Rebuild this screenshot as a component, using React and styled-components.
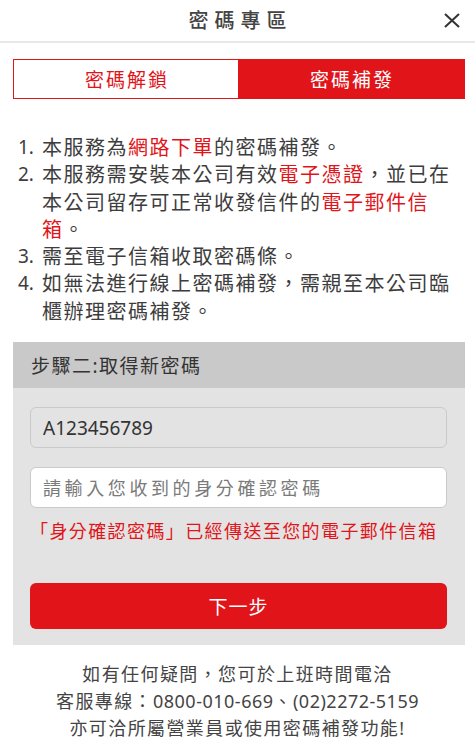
import React from "react";
import styled, { createGlobalStyle } from "styled-components";

const Global = createGlobalStyle`
  html, body {
    margin: 0;
    padding: 0;
    background: #fff;
  }
  body {
    font-family: "Noto Sans", "Noto Sans CJK TC", sans-serif;
    color: #333;
  }
`;

const RED = "#e11419";

const Page = styled.div`
  width: 475px;
  min-height: 746px;
  background: #fff;
`;

const Header = styled.header`
  height: 41px;
  border-bottom: 2px solid #e8e8e8;
  display: flex;
  align-items: center;
  justify-content: center;
  position: relative;
`;

const Title = styled.h1`
  margin: 0;
  font-size: 20px;
  font-weight: 500;
  letter-spacing: 6px;
  padding-left: 6px;
  color: #444;
  line-height: 1;
`;

const Close = styled.button`
  position: absolute;
  right: 14px;
  top: 11px;
  width: 18px;
  height: 18px;
  padding: 0;
  border: 0;
  background: none;
  display: flex;
  align-items: center;
  justify-content: center;
`;

const Content = styled.main`
  margin: 0 10px 0 13px;
`;

const Tabs = styled.div`
  margin-top: 16px;
  display: grid;
  grid-template-columns: 224px 1fr;
  height: 40px;
  border: 1.5px solid ${RED};
  box-sizing: border-box;
`;

const Tab = styled.div`
  display: flex;
  align-items: center;
  justify-content: center;
  font-size: 19px;
  letter-spacing: 2px;
  padding-left: 2px;
  background: ${(p) => (p.active ? RED : "#fff")};
  color: ${(p) => (p.active ? "#fff" : RED)};
`;

const List = styled.ol`
  list-style: none;
  margin: 35px 0 0;
  padding: 0 0 0 5px;
`;

const Item = styled.li`
  display: grid;
  grid-template-columns: 24px 1fr;
  font-size: 20px;
  line-height: 27.3px;
  color: #3d3d3d;
`;

const Num = styled.span`
  font-size: 19px;
`;

const Body = styled.span`
  letter-spacing: 1.5px;
`;

const Hl = styled.span`
  color: ${RED};
`;

const Panel = styled.section`
  margin-top: 17px;
  background: #e3e3e3;
`;

const PanelHead = styled.div`
  height: 46px;
  background: #c9c9c9;
  display: flex;
  align-items: center;
  padding-left: 18px;
  font-size: 19px;
  letter-spacing: 1.5px;
  color: #333;
`;

const PanelBody = styled.div`
  padding: 19px 18px 16px 17px;
  display: flex;
  flex-direction: column;
`;

const Field = styled.input`
  box-sizing: border-box;
  height: 41px;
  width: 100%;
  border: 1.5px solid #cacaca;
  border-radius: 6px;
  padding: 0 12px;
  font-family: "Noto Sans", "Noto Sans CJK TC", sans-serif;
  font-size: 19px;
  color: #333;
  background: ${(p) => (p.disabled ? "#e3e3e3" : "#fff")};
  margin-bottom: ${(p) => p.gap || 0}px;
  outline: none;
  &::placeholder {
    color: #7a7a7a;
    font-size: 18px;
    letter-spacing: 3.6px;
  }
  &:disabled {
    -webkit-text-fill-color: #333;
    opacity: 1;
  }
`;

const Notice = styled.p`
  margin: 10px 0 0 0;
  font-size: 18px;
  letter-spacing: 1.4px;
  line-height: 27px;
  color: ${RED};
  white-space: nowrap;
`;

const NextButton = styled.button`
  margin-top: 38px;
  height: 46px;
  border: 0;
  border-radius: 6px;
  background: ${RED};
  color: #fff;
  font-family: "Noto Sans", "Noto Sans CJK TC", sans-serif;
  font-size: 19px;
  letter-spacing: 1px;
`;

const Footer = styled.footer`
  padding: 16px 0 10px;
  text-align: center;
  font-size: 18px;
  letter-spacing: 1.4px;
  line-height: 27px;
  color: #444;
`;

const Digits = styled.span`
  letter-spacing: 0.5px;
`;

export default function App() {
  return (
    <Page>
      <Global />
      <Header>
        <Title>密碼專區</Title>
        <Close aria-label="close">
          <svg width="16" height="15" viewBox="0 0 16 15">
            <path d="M1 1L15 14M15 1L1 14" stroke="#333" strokeWidth="2" fill="none" />
          </svg>
        </Close>
      </Header>
      <Content>
        <Tabs>
          <Tab>密碼解鎖</Tab>
          <Tab active>密碼補發</Tab>
        </Tabs>
        <List>
          <Item>
            <Num>1.</Num>
            <Body>
              本服務為<Hl>網路下單</Hl>的密碼補發。
            </Body>
          </Item>
          <Item>
            <Num>2.</Num>
            <Body>
              本服務需安裝本公司有效<Hl>電子憑證</Hl>，並已在本公司留存可正常收發信件的
              <Hl>電子郵件信箱</Hl>。
            </Body>
          </Item>
          <Item>
            <Num>3.</Num>
            <Body>需至電子信箱收取密碼條。</Body>
          </Item>
          <Item>
            <Num>4.</Num>
            <Body>如無法進行線上密碼補發，需親至本公司臨櫃辦理密碼補發。</Body>
          </Item>
        </List>
        <Panel>
          <PanelHead>步驟二:取得新密碼</PanelHead>
          <PanelBody>
            <Field disabled value="A123456789" readOnly gap={19} />
            <Field placeholder="請輸入您收到的身分確認密碼" />
            <Notice>「身分確認密碼」已經傳送至您的電子郵件信箱</Notice>
            <NextButton>下一步</NextButton>
          </PanelBody>
        </Panel>
      </Content>
      <Footer>
        如有任何疑問，您可於上班時間電洽
        <br />
        客服專線：<Digits>0800-010-669</Digits>、<Digits>(02)2272-5159</Digits>
        <br />
        亦可洽所屬營業員或使用密碼補發功能!
      </Footer>
    </Page>
  );
}
